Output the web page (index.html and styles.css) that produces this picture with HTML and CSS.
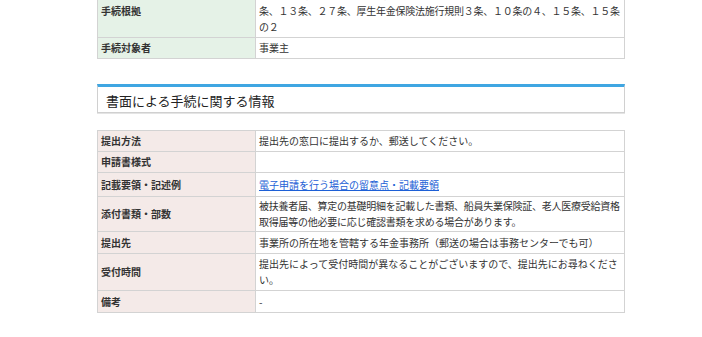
FILE: index.html
```html
<!DOCTYPE html>
<html lang="ja">
<head>
<meta charset="utf-8">
<title>手続情報</title>
<link rel="stylesheet" href="styles.css">
</head>
<body>
<div class="page">
  <table class="info info-green first">
    <tr>
      <th>手続根拠</th>
      <td class="dense">健康保険法３条、健康保険法施行規則３８条、厚生年金保険法６条、８条、１２条、１３条、２７条、厚生年金保険法施行規則３条、１０条の４、１５条、１５条の２</td>
    </tr>
    <tr>
      <th>手続対象者</th>
      <td>事業主</td>
    </tr>
  </table>

  <h2 class="section-title">書面による手続に関する情報</h2>

  <table class="info info-pink">
    <tr>
      <th>提出方法</th>
      <td>提出先の窓口に提出するか、郵送してください。</td>
    </tr>
    <tr>
      <th>申請書様式</th>
      <td></td>
    </tr>
    <tr>
      <th>記載要領・記述例</th>
      <td class="link-cell"><a href="#">電子申請を行う場合の留意点・記載要領</a></td>
    </tr>
    <tr>
      <th>添付書類・部数</th>
      <td class="compact dense">被扶養者届、算定の基礎明細を記載した書類、船員失業保険証、老人医療受給資格取得届等の他必要に応じ確認書類を求める場合があります。</td>
    </tr>
    <tr>
      <th>提出先</th>
      <td class="roomy">事業所の所在地を管轄する年金事務所（郵送の場合は事務センターでも可）</td>
    </tr>
    <tr>
      <th>受付時間</th>
      <td>提出先によって受付時間が異なることがございますので、提出先にお尋ねください。</td>
    </tr>
    <tr>
      <th>備考</th>
      <td class="roomy">-</td>
    </tr>
  </table>
</div>
</body>
</html>
```
FILE: styles.css
```css
html, body {
  margin: 0;
  padding: 0;
  background: #ffffff;
}

body {
  font-family: "Noto Sans CJK JP", "Noto Sans", sans-serif;
  color: #333333;
  overflow: hidden;
}

.page {
  width: 528px;
  margin-left: 97px;
}

.info {
  width: 528px;
  border-collapse: collapse;
  table-layout: fixed;
  font-size: 10px;
  line-height: 16px;
}

.first {
  margin-top: -16px;
}

.info th,
.info td {
  border: 1px solid #d3d3d3;
  padding: 2px 0 2px 3px;
  vertical-align: middle;
  text-align: left;
}

.info th {
  width: 154px;
  font-weight: bold;
  color: #333333;
}

.info td {
  background: #ffffff;
}

.info td.dense {
  letter-spacing: -0.25px;
}

.info-green th {
  background: #e5f2e7;
}

.info-pink th {
  background: #f4eae8;
}

.info td.link-cell {
  padding-top: 4px;
  padding-bottom: 3px;
}

.info td.compact {
  padding-top: 1px;
  padding-bottom: 1px;
}

.info td.roomy {
  padding-top: 3px;
  padding-bottom: 2px;
}

.info a {
  color: #1d5fd6;
  text-decoration: underline;
}

.section-title {
  margin: 25px 0 17px 0;
  padding: 5px 8px 2px 8px;
  font-size: 13px;
  line-height: 18px;
  font-weight: normal;
  color: #222222;
  border: 1px solid #d0d0d0;
  border-top: 3px solid #3fa6e2;
  box-shadow: 0 1px 0 #e4e4e4;
}
```
